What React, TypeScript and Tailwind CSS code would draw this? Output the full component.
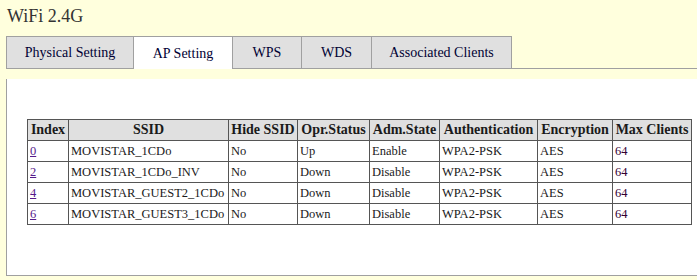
const tabs = [
  { label: "Physical Setting", width: "w-[127px]" },
  { label: "AP Setting", width: "w-[99px]", active: true },
  { label: "WPS", width: "w-[69px]" },
  { label: "WDS", width: "w-[70px]" },
  { label: "Associated Clients", width: "w-[141px]" },
];

const columns = [
  { label: "Index", width: "w-[41px]" },
  { label: "SSID", width: "w-[160px]" },
  { label: "Hide SSID", width: "w-[69px]" },
  { label: "Opr.Status", width: "w-[72px]" },
  { label: "Adm.State", width: "w-[70px]" },
  { label: "Authentication", width: "w-[98px]" },
  { label: "Encryption", width: "w-[75px]" },
  { label: "Max Clients", width: "w-[79px]" },
];

const rows = [
  { index: "0", ssid: "MOVISTAR_1CDo", hide: "No", opr: "Up", adm: "Enable" },
  { index: "2", ssid: "MOVISTAR_1CDo_INV", hide: "No", opr: "Down", adm: "Disable" },
  { index: "4", ssid: "MOVISTAR_GUEST2_1CDo", hide: "No", opr: "Down", adm: "Disable" },
  { index: "6", ssid: "MOVISTAR_GUEST3_1CDo", hide: "No", opr: "Down", adm: "Disable" },
];

export default function App() {
  return (
    <div className="h-[280px] w-[697px] overflow-hidden bg-[#ffffdd] font-[family-name:'Liberation_Serif','Times_New_Roman',serif]">
      <h1 className="pl-[7px] pt-[6px] text-[18px] leading-[20px] font-normal text-[#333333]">
        WiFi 2.4G
      </h1>

      <div className="ml-[6px] mt-[10px] flex h-[33px] items-end border-b border-[#a0a0a0]">
        {tabs.map((tab, i) => (
          <div
            key={tab.label}
            className={`-mb-px flex h-[33px] items-center justify-center border-l border-t border-[#a0a0a0] text-[14px] text-[#000033] ${tab.width} ${
              i === tabs.length - 1 ? "border-r" : ""
            } ${tab.active ? "bg-white" : "border-b bg-[#e0e0e0]"}`}
          >
            {tab.label}
          </div>
        ))}
      </div>

      <div className="ml-[6px] mt-[10px] h-[197px] border-b border-l border-[#a0a0a0] bg-white pl-[20px] pt-[40px]">
        <table className="w-[665px] table-fixed border-collapse text-[12.5px] text-[#1a1a1a]">
          <thead>
            <tr className="h-[21px] bg-[#e0e0e0]">
              {columns.map((col) => (
                <th
                  key={col.label}
                  className={`${col.width} whitespace-nowrap border border-[#555555] px-[2px] text-center text-[14px] font-bold leading-none`}
                >
                  {col.label}
                </th>
              ))}
            </tr>
          </thead>
          <tbody>
            {rows.map((row) => (
              <tr key={row.index} className="h-[21px]">
                <td className="border border-[#555555] px-[2px] leading-none">
                  <a href="#" className="text-[#551a8b] underline">
                    {row.index}
                  </a>
                </td>
                <td className="whitespace-nowrap border border-[#555555] px-[2px] leading-none">{row.ssid}</td>
                <td className="border border-[#555555] px-[2px] leading-none">{row.hide}</td>
                <td className="border border-[#555555] px-[2px] leading-none">{row.opr}</td>
                <td className="border border-[#555555] px-[2px] leading-none">{row.adm}</td>
                <td className="border border-[#555555] px-[2px] leading-none">WPA2-PSK</td>
                <td className="border border-[#555555] px-[2px] leading-none">AES</td>
                <td className="border border-[#555555] px-[2px] leading-none text-[#330033]">64</td>
              </tr>
            ))}
          </tbody>
        </table>
      </div>
    </div>
  );
}
